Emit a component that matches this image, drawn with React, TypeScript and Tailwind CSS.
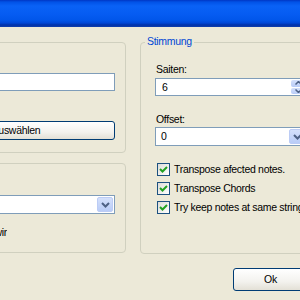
import React from "react";

function Check() {
  return (
    <span className="w-[13px] h-[13px] shrink-0 border border-[#1C5180] bg-[linear-gradient(135deg,#DCDCD7,#FFFFFF)] flex items-center justify-center">
      <svg width="9" height="9" viewBox="0 0 9 9">
        <path d="M1 4 L3.5 6.5 L8 2" fill="none" stroke="#21A121" strokeWidth="2" />
      </svg>
    </span>
  );
}

function DropBtn() {
  return (
    <span className="w-[16px] h-full shrink-0 rounded-[2px] border border-[#BCCCF5] bg-[linear-gradient(to_bottom,#D4E0FB,#B9CCF7)] flex items-center justify-center">
      <svg width="9" height="6" viewBox="0 0 9 6">
        <path d="M1 1 L4.5 4.5 L8 1" fill="none" stroke="#4D6185" strokeWidth="2" />
      </svg>
    </span>
  );
}

export default function App() {
  return (
    <div className="w-[300px] h-[300px] overflow-hidden bg-[#ECE9D8] flex flex-col font-['Liberation_Sans',Arial,sans-serif] text-[10.5px] tracking-[-0.3px] text-black leading-[13px]">
      <div className="h-[27px] shrink-0 bg-[linear-gradient(to_bottom,#0036C4_0px,#0152E6_2px,#0A62F6_6px,#065CF2_14px,#0156EA_20px,#0047D6_23px,#0031A8_25px,#0F3FAE_27px)]" />
      <div className="flex items-start gap-[14px] ml-[-85px] mt-[15px] shrink-0">
        <div className="w-[211px] shrink-0 flex flex-col gap-[10px]">
          <div className="h-[111px] border border-[#D0D0BF] rounded-[4px] px-[10px] pt-[30px] flex flex-col">
            <div className="h-[18px] border border-[#7F9DB9] bg-white" />
            <div className="mt-[30px] h-[19px] pr-[9px] border border-[#003C74] rounded-[3px] bg-[linear-gradient(to_bottom,#FFFFFF,#F3F2EE_60%,#E3E0D6)] flex items-center justify-center">
              Auswählen
            </div>
          </div>
          <div className="h-[90px] border border-[#D0D0BF] rounded-[4px] px-[10px] pt-[31px] flex flex-col">
            <div className="h-[19px] border border-[#7F9DB9] bg-white flex items-stretch justify-end p-[1px]">
              <DropBtn />
            </div>
            <div className="mt-[12px] w-[81px] whitespace-nowrap overflow-hidden flex justify-end">
              <span>Tonart übernehmen wir</span>
            </div>
          </div>
        </div>
        <div className="relative w-[182px] h-[212px] shrink-0 border border-[#D0D0BF] rounded-[4px] px-[14px] pt-[20px] flex flex-col">
          <span className="absolute left-[4px] top-[-8px] px-[2px] bg-[#ECE9D8] text-[#0046D5]">Stimmung</span>
          <div className="pl-[1px]">Saiten:</div>
          <div className="mt-[2px] h-[18px] border border-[#7F9DB9] bg-white flex items-stretch">
            <span className="flex-1 pl-[6px] flex items-center">6</span>
            <span className="w-[16px] flex flex-col gap-px p-px">
              <span className="flex-1 rounded-[2px] bg-[linear-gradient(to_bottom,#D4E0FB,#B9CCF7)] flex items-center justify-center">
                <svg width="7" height="4" viewBox="0 0 7 4"><path d="M0.5 3.5 L3.5 0.5 L6.5 3.5" fill="none" stroke="#4D6185" strokeWidth="1.5" /></svg>
              </span>
              <span className="flex-1 rounded-[2px] bg-[linear-gradient(to_bottom,#D4E0FB,#B9CCF7)] flex items-center justify-center">
                <svg width="7" height="4" viewBox="0 0 7 4"><path d="M0.5 0.5 L3.5 3.5 L6.5 0.5" fill="none" stroke="#4D6185" strokeWidth="1.5" /></svg>
              </span>
            </span>
          </div>
          <div className="mt-[17px] pl-[1px]">Offset:</div>
          <div className="mt-[1px] h-[19px] border border-[#7F9DB9] bg-white flex items-stretch p-[1px]">
            <span className="flex-1 pl-[4px] flex items-center">0</span>
            <DropBtn />
          </div>
          <div className="mt-[17px] flex flex-col gap-[6px] pl-[2px]">
            <div className="flex items-center gap-[4px] whitespace-nowrap"><Check /><span>Transpose afected notes.</span></div>
            <div className="flex items-center gap-[4px] whitespace-nowrap"><Check /><span>Transpose Chords</span></div>
            <div className="flex items-center gap-[4px] whitespace-nowrap"><Check /><span>Try keep notes at same string</span></div>
          </div>
        </div>
      </div>
      <div className="pl-[233px] mt-[14px] shrink-0">
        <div className="w-[75px] h-[23px] border border-[#003C74] rounded-[3px] bg-[linear-gradient(to_bottom,#FFFFFF,#F3F2EE_60%,#E3E0D6)] flex items-center justify-center">
          Ok
        </div>
      </div>
    </div>
  );
}
